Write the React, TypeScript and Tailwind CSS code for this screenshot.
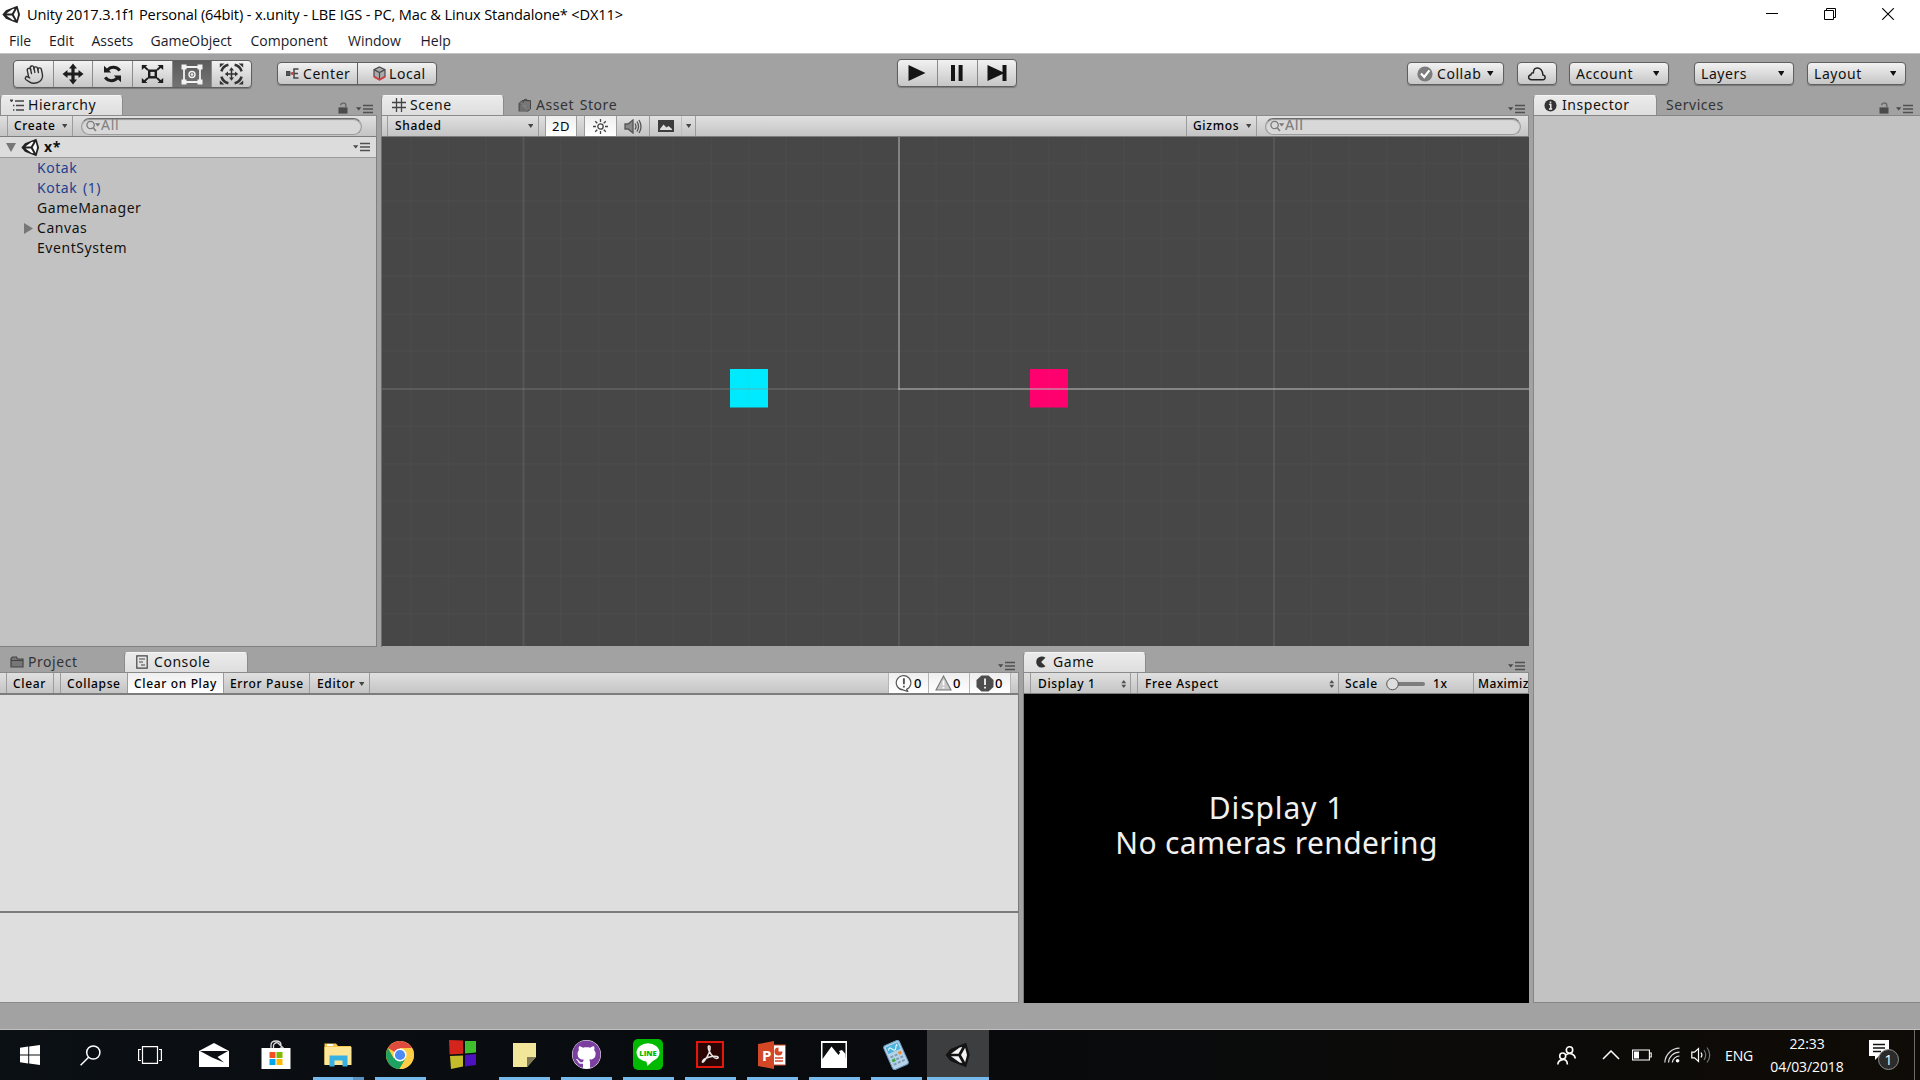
import React from "react";
import { Hand } from "lucide-react";
import { FaGithub } from "react-icons/fa";

const UI = "font-['Noto_Sans','DejaVu_Sans',sans-serif]";
const LABEL = "text-[14px] leading-[20px] tracking-[0.55px] [word-spacing:1.5px] whitespace-nowrap";
const SMALL = "text-[12px] leading-[20px] tracking-[0.65px] font-medium whitespace-nowrap";
const BAR = "flex h-[22px] shrink-0 items-stretch border-t border-[#8a8a8a] border-b border-b-[#7d7d7d] bg-gradient-to-b from-[#e0e0e0] to-[#c4c4c4]";
const BUTTON = "flex items-center rounded-[4px] border border-[#5f5f5f] bg-gradient-to-b from-[#f2f2f2] to-[#c6c6c6] shadow-[0_1px_1px_rgba(0,0,0,0.25)]";

function UnityMark({ size, dark = "#222", light = "#fff" }: { size: number; dark?: string; light?: string }) {
  return (
    <svg width={size} height={size} viewBox="0 0 24 24" className="shrink-0">
      <path d="M0.5 12 L5 6.5 L19.5 0.8 L22.8 12 L19.5 23.2 L5 17.5 Z" fill={dark} />
      <path d="M5.5 10.8 L13.5 5 L16 4.6 L12.5 10.8 Z" fill={light} />
      <path d="M5.5 13.2 L13.5 19 L16 19.4 L12.5 13.2 Z" fill={light} />
      <path d="M14.8 12 L18.6 5.2 L20.3 12 L18.6 18.8 Z" fill={light} />
    </svg>
  );
}

function Down({ w = 6.5, color = "#444" }: { w?: number; color?: string }) {
  return (
    <svg width={w} height={w > 6 ? 5 : 4} viewBox="0 0 8 5" preserveAspectRatio="none" className="shrink-0">
      <path d="M0 0H8L4 5Z" fill={color} />
    </svg>
  );
}

function UpDown() {
  return (
    <svg width="5.5" height="8" viewBox="0 0 6 10" className="shrink-0">
      <path d="M3 0L6 4H0ZM3 10L0 6H6Z" fill="#505050" />
    </svg>
  );
}

function PaneMenu() {
  return (
    <svg width="18" height="10" viewBox="0 0 18 10" className="shrink-0">
      <path d="M0 3.2H5.4L2.7 6.4Z" fill="#4a4a4a" />
      <path d="M7 1.6H17M7 5H17M7 8.4H17" stroke="#505050" strokeWidth="1.5" />
    </svg>
  );
}

function Lock() {
  return (
    <svg width="10" height="12" viewBox="0 0 10 12" className="shrink-0">
      <rect x="0.5" y="5.4" width="9" height="6.2" fill="#4b4b4b" />
      <path d="M2.6 3.2C2.6 0.6 7.6 0.2 7.8 3V5.6" stroke="#6a6a6a" strokeWidth="1.4" fill="none" />
    </svg>
  );
}

function Search({ className }: { className: string }) {
  return (
    <div className={`flex h-[17px] items-center self-center rounded-full border border-[#9a9a9a] border-t-[#6d6d6d] bg-[#d8d8d8] pl-[4px] shadow-[inset_0_1px_1px_rgba(0,0,0,0.3)] ${className}`}>
      <svg width="15" height="12" viewBox="0 0 15 12" className="shrink-0">
        <circle cx="4.6" cy="5" r="3.7" stroke="#7b7b7b" strokeWidth="1.3" fill="none" />
        <path d="M7 7.6L10 11" stroke="#7b7b7b" strokeWidth="1.5" />
        <path d="M9 3.2H14.4L11.7 6.4Z" fill="#777" />
      </svg>
      <span className="pb-[2px] text-[14px] leading-[14px] tracking-[0.7px] text-[#808080]">All</span>
    </div>
  );
}

function Tab({ icon, label, className }: { icon: React.ReactNode; label: string; className: string }) {
  return (
    <div className={`flex h-[20px] items-center ${LABEL} ${className}`}>
      <span className="flex w-[18px] shrink-0 items-center">{icon}</span>
      {label}
    </div>
  );
}

const ACTIVE = "rounded-t-[4px] border-t border-x border-[#8b8b8b] border-t-[#f5f5f5] bg-gradient-to-b from-[#ebebeb] to-[#dedede] pb-[1px] text-[#111]";
const IDLE = "text-[#333]";

function Menu() {
  const items: [string, string][] = [
    ["File", "w-[40px]"],
    ["Edit", "w-[42.5px]"],
    ["Assets", "w-[59px]"],
    ["GameObject", "w-[100px]"],
    ["Component", "w-[97.5px]"],
    ["Window", "w-[72.5px]"],
    ["Help", "w-[40px]"],
  ];
  return (
    <header className="h-[53px] shrink-0 bg-white font-['Open_Sans','Noto_Sans',sans-serif] text-black">
      <div className="flex h-[28px] items-center">
        <div className="ml-[2px] mr-[6px]">
          <UnityMark size={19} />
        </div>
        <span className="text-[14.6px] leading-[20px] tracking-[-0.14px] whitespace-nowrap">
          Unity 2017.3.1f1 Personal (64bit) - x.unity - LBE IGS - PC, Mac &amp; Linux Standalone* &lt;DX11&gt;
        </span>
        <div className="ml-auto flex items-center gap-[46px] pr-[26px]">
          <svg width="12" height="12" viewBox="0 0 12 12"><path d="M0 5.5H12" stroke="#000" /></svg>
          <svg width="12" height="12" viewBox="0 0 12 12" fill="none" stroke="#000"><path d="M0.5 2.5H9.5V11.5H0.5ZM2.5 2.5V0.5H11.5V9.5H9.5" /></svg>
          <svg width="12" height="12" viewBox="0 0 12 12"><path d="M0.2 0.2L11.8 11.8M11.8 0.2L0.2 11.8" stroke="#000" strokeWidth="1.1" /></svg>
        </div>
      </div>
      <nav className="flex h-[25px] pl-[9px] text-[14px] leading-[26px] text-[#1a1a2a]">
        {items.map(([t, w]) => (
          <span key={t} className={`${w} shrink-0 whitespace-nowrap`}>{t}</span>
        ))}
      </nav>
    </header>
  );
}

function ToolIcon({ kind }: { kind: number }) {
  if (kind === 0) return <Hand size={21} strokeWidth={1.6} color="#333" className="-rotate-12" />;
  if (kind === 1)
    return (
      <svg width="22" height="22" viewBox="0 0 22 22" fill="#1d1d1d">
        <path d="M11 0.5L15 5.5H12.6V9.4H16.5V7L21.5 11L16.5 15V12.6H12.6V16.5H15L11 21.5L7 16.5H9.4V12.6H5.5V15L0.5 11L5.5 7V9.4H9.4V5.5H7Z" />
      </svg>
    );
  if (kind === 2)
    return (
      <svg width="19" height="18" viewBox="0 0 19 18" fill="none" stroke="#1d1d1d" strokeWidth="3">
        <path d="M4.5 5.2C7.5 1.4 13.5 1.2 16.8 5.6" />
        <path d="M14.5 12.8C11.5 16.6 5.5 16.8 2.2 12.4" />
        <path d="M1 0.8V7.6H8.2Z" fill="#1d1d1d" stroke="none" />
        <path d="M18 17.2V10.4H10.8Z" fill="#1d1d1d" stroke="none" />
      </svg>
    );
  if (kind === 3)
    return (
      <svg width="23" height="20" viewBox="0 0 23 20" fill="none" stroke="#1d1d1d">
        <rect x="8.2" y="6.7" width="6.6" height="6.6" strokeWidth="2.4" />
        <path d="M2 1.5L7 6M21 1.5L16 6M2 18.5L7 14M21 18.5L16 14" strokeWidth="1.8" />
        <path d="M0.8 6V1H6.5ZM22.2 6V1H16.5ZM0.8 14V19H6.5ZM22.2 14V19H16.5Z" fill="#1d1d1d" stroke="none" />
      </svg>
    );
  if (kind === 4)
    return (
      <svg width="22" height="21" viewBox="0 0 22 21" fill="none" stroke="#f2f2f2">
        <path d="M3 3H19V18H3Z" strokeWidth="1.8" />
        <circle cx="11" cy="10.5" r="3" strokeWidth="1.4" />
        <circle cx="11" cy="10.5" r="0.9" fill="#f2f2f2" />
        <path d="M0.5 0.5H5.5V5.5H0.5ZM16.5 0.5H21.5V5.5H16.5ZM0.5 15.5H5.5V20.5H0.5ZM16.5 15.5H21.5V20.5H16.5Z" fill="#f2f2f2" stroke="none" />
      </svg>
    );
  return (
    <svg width="25" height="22" viewBox="0 0 25 22" fill="none" stroke="#333">
      <path d="M2.4 8.4C3.4 5 6 2.6 9.4 1.8M15.6 1.8C19 2.6 21.6 5 22.6 8.4M2.4 13.6C3.4 17 6 19.4 9.4 20.2M15.6 20.2C19 19.4 21.6 17 22.6 13.6" strokeWidth="2.6" />
      <path d="M0.8 4.4V0.5H5.4ZM24.2 4.4V0.5H19.6ZM0.8 17.6V21.5H5.4ZM24.2 17.6V21.5H19.6Z" fill="#333" stroke="none" />
      <path d="M12.5 6V16M7.5 11H17.5" strokeWidth="1.5" />
      <path d="M12.5 4.2L15 7.4H10ZM12.5 17.8L15 14.6H10ZM5.8 11L9 8.6V13.4ZM19.2 11L16 8.6V13.4Z" fill="#333" stroke="none" />
    </svg>
  );
}

function Toolbar() {
  return (
    <div className="flex h-[42px] shrink-0 items-start border-t border-[#c4c4c4] bg-[#a2a2a2] pl-[13px] text-[#111]">
      <div className={`${BUTTON} mt-[6px] h-[28px] w-[239px] overflow-hidden`}>
        {[0, 1, 2, 3, 4, 5].map((k) => (
          <div
            key={k}
            className={`flex h-full flex-1 items-center justify-center ${k < 5 ? "border-r border-[#8a8a8a]" : ""} ${k === 4 ? "bg-gradient-to-b from-[#5c5c5c] to-[#737373]" : ""}`}
          >
            <ToolIcon kind={k} />
          </div>
        ))}
      </div>
      <div className={`${BUTTON} ml-[25px] mt-[8px] h-[23px] w-[160px] ${LABEL}`}>
        <div className="flex h-full w-[80px] items-center border-r border-[#5f5f5f] pl-[8px]">
          <svg width="13" height="11" viewBox="0 0 13 11" className="mr-[4px]" fill="none" stroke="#444">
            <path d="M0 3.5H4V7.5H0Z" fill="#555" />
            <path d="M12.5 1H8V10H12.5M8 5.5H12" strokeWidth="1.5" />
            <circle cx="6.3" cy="5.5" r="1.4" fill="#b44" stroke="none" />
          </svg>
          Center
        </div>
        <div className="flex items-center pl-[15px]">
          <svg width="13" height="15" viewBox="0 0 13 15" className="mr-[3px]" fill="none" stroke="#4a4a4a" strokeWidth="1.2">
            <path d="M6.5 1L12 3.6V10.6L6.5 13.8L1 10.6V3.6Z" fill="#aaa" />
            <path d="M1 3.6L6.5 6.6L12 3.6M6.5 6.6V13" />
            <path d="M1 10.6L6.5 13.8L12 10.6" stroke="#c44" strokeWidth="1.8" />
          </svg>
          Local
        </div>
      </div>
      <div className={`${BUTTON} ml-[460px] mt-[5px] h-[28px] w-[120px]`}>
        <div className="flex h-full w-[40px] items-center justify-center border-r border-[#8a8a8a] pr-[2px]">
          <svg width="18" height="16" viewBox="0 0 19 17"><path d="M0.5 0L18.5 8.5L0.5 17Z" fill="#141414" /></svg>
        </div>
        <div className="flex h-full w-[40px] items-center justify-center border-r border-[#8a8a8a] pr-[1px]">
          <svg width="12" height="16" viewBox="0 0 12 17" preserveAspectRatio="none"><path d="M0 0H4V17H0ZM7.6 0H11.6V17H7.6Z" fill="#141414" /></svg>
        </div>
        <div className="flex h-full flex-1 items-center justify-center">
          <svg width="20" height="16" viewBox="0 0 20 17" preserveAspectRatio="none"><path d="M0.5 0L15.5 7.5V0H19.5V17H15.5V9.5L0.5 17Z" fill="#141414" /></svg>
        </div>
      </div>
      <div className={`${BUTTON} ml-[390px] mt-[8px] h-[23px] w-[97px] pl-[9px] ${LABEL}`}>
        <svg width="16" height="16" viewBox="0 0 16 16" className="mr-[4px]">
          <circle cx="8" cy="8" r="7.6" fill="#7d7d7d" />
          <path d="M4 7.6L7.2 11L12.4 4.4" stroke="#fff" strokeWidth="2.2" fill="none" />
        </svg>
        Collab
        <span className="ml-[6px] flex items-center"><Down color="#111" /></span>
      </div>
      <div className={`${BUTTON} ml-[13px] mt-[8px] h-[23px] w-[40px] justify-center`}>
        <svg width="20" height="14" viewBox="0 0 20 14" fill="none" stroke="#222" strokeWidth="1.4">
          <path d="M4.6 12.8H15.8C18.8 12.4 19 8.6 15.9 8C15.8 3.2 13 0.9 10.2 1C7.8 1.1 6.4 3.4 6.4 5.8C4.8 5.6 4 6.6 4 7.8C0.6 8.6 0.8 12.2 4.6 12.8Z" />
        </svg>
      </div>
      {[
        ["Account", "ml-[12px] w-[100px]"],
        ["Layers", "ml-[25px] w-[100px]"],
        ["Layout", "ml-[13px] w-[99px]"],
      ].map(([t, c]) => (
        <div key={t} className={`${BUTTON} mt-[8px] h-[23px] justify-between pl-[6px] pr-[9px] ${LABEL} ${c}`}>
          {t}
          <Down color="#111" />
        </div>
      ))}
    </div>
  );
}

function Hierarchy() {
  return (
    <section className="flex w-[377px] shrink-0 flex-col">
      <div className="flex">
        <Tab
          className={`${ACTIVE} w-[123px] pl-[9px]`}
          label="Hierarchy"
          icon={
            <svg width="15" height="13" viewBox="0 0 15 13" stroke="#444" strokeWidth="1.5">
              <path d="M5 2H14M6 6.5H14M6 11H14M0 1.2H3M1.5 1V3M3 6.5H4.4M3 11H4.4" />
            </svg>
          }
        />
        <div className="ml-auto flex items-end gap-[8px] pb-[1px] pr-[3px]">
          <Lock />
          <PaneMenu />
        </div>
      </div>
      <div className={`${BAR} border-r`}>
        <div className="w-[8px] border-r border-[#9c9c9c]" />
        <div className={`flex w-[65px] items-center justify-between border-r border-[#9c9c9c] pl-[6px] pr-[5px] ${SMALL}`}>
          Create
          <Down w={5.5} />
        </div>
        <Search className="ml-[8px] w-[281px]" />
      </div>
      <div className="flex flex-1 flex-col border-r border-b border-[#808080] bg-[#c2c2c2] text-[#111]">
        <div className="flex h-[21px] items-center border-b border-[#9a9a9a] bg-[#dcdcdc] pl-[6px] pr-[5px]">
          <svg width="10" height="9" viewBox="0 0 10 9"><path d="M0 0H10L5 9Z" fill="#777" /></svg>
          <div className="ml-[5px] mr-[4px]"><UnityMark size={19} /></div>
          <span className={`${LABEL} font-bold`}>x*</span>
          <span className="ml-auto"><PaneMenu /></span>
        </div>
        <ul className={LABEL}>
          <li className="pl-[37px] text-[#1f3f8f]">Kotak</li>
          <li className="pl-[37px] text-[#1f3f8f]">Kotak (1)</li>
          <li className="pl-[37px]">GameManager</li>
          <li className="flex items-center pl-[24px]">
            <svg width="9" height="11" viewBox="0 0 9 11" className="mr-[4px]"><path d="M0 0L9 5.5L0 11Z" fill="#777" /></svg>
            Canvas
          </li>
          <li className="pl-[37px]">EventSystem</li>
        </ul>
      </div>
    </section>
  );
}

function Grid() {
  const xs = Array.from({ length: 31 }, (_, i) => i - 13).filter((i) => i % 10 !== 0);
  const ys = [-6, -5, -4, -3, -2, -1, 1, 2, 3, 4, 5, 6];
  return (
    <svg width="1147" height="509" viewBox="382 137 1147 509" className="block">
      <rect x="382" y="137" width="1147" height="509" fill="#474747" />
      <rect x="730" y="369" width="38" height="38.5" fill="#00eaff" />
      <rect x="1030" y="369" width="38" height="38.5" fill="#ff006e" />
      <g stroke="#888" strokeOpacity="0.055" strokeWidth="2">
        {xs.map((i) => (
          <path key={i} d={`M${898.7 + i * 37.53} 137V646`} />
        ))}
        {ys.map((i) => (
          <path key={i} d={`M382 ${388.7 + i * 37.53}H1529`} />
        ))}
      </g>
      <path d="M523.5 137V646M1274 137V646M899 389V646" stroke="#fff" strokeOpacity="0.085" strokeWidth="2" />
      <path d="M382 389H898" stroke="#8a8a8a" strokeOpacity="0.3" strokeWidth="2" />
      <path d="M899 137V390" stroke="#828282" strokeWidth="2" />
      <path d="M898 389H1529" stroke="#b4b4b4" strokeOpacity="0.58" strokeWidth="2" />
    </svg>
  );
}

function Scene() {
  return (
    <section className="ml-[4px] flex w-[1148px] shrink-0 flex-col">
      <div className="flex">
        <Tab
          className={`${ACTIVE} w-[123px] pl-[10px]`}
          label="Scene"
          icon={<svg width="14" height="14" viewBox="0 0 14 14" stroke="#444" strokeWidth="1.3"><path d="M4.5 0V14M9.5 0V14M0 4.5H14M0 9.5H14" /></svg>}
        />
        <Tab
          className={`${IDLE} pl-[14px]`}
          label="Asset Store"
          icon={
            <svg width="13" height="14" viewBox="0 0 13 14">
              <path d="M0.5 5H9.5V13.5H0.5Z" fill="#555" />
              <path d="M1.5 5L4 2.5H12.5V11L9.5 13.5" fill="#777" stroke="#444" />
              <path d="M5 5C5 0.5 9.5 0 10 3.5" fill="none" stroke="#444" />
              <path d="M3 7V13M5 7V13M7 7V13" stroke="#888" />
            </svg>
          }
        />
        <span className="ml-auto flex items-end pb-[1px] pr-[3px]"><PaneMenu /></span>
      </div>
      <div className={`${BAR} border-l border-r ${SMALL}`}>
        <div className="w-[6px] border-r border-[#9c9c9c]" />
        <div className="flex w-[151px] items-center justify-between border-r border-[#9c9c9c] pl-[7px] pr-[5px]">Shaded<Down w={5.5} /></div>
        <div className="w-[7px] border-r border-[#9c9c9c]" />
        <div className="flex w-[31px] items-center justify-center border-r border-[#9c9c9c] bg-gradient-to-b from-[#efefef] to-white text-[13px] font-normal">2D</div>
        <div className="w-[8px] border-r border-[#9c9c9c]" />
        <div className="flex w-[32px] items-center justify-center border-r border-[#9c9c9c] bg-gradient-to-b from-[#efefef] to-white">
          <svg width="15" height="15" viewBox="0 0 15 15" fill="none" stroke="#444" strokeWidth="1.3">
            <circle cx="7.5" cy="7.5" r="2.7" />
            <path d="M7.5 0V3M7.5 12V15M0 7.5H3M12 7.5H15M2.2 2.2L4.3 4.3M10.7 10.7L12.8 12.8M12.8 2.2L10.7 4.3M4.3 10.7L2.2 12.8" />
          </svg>
        </div>
        <div className="flex w-[33px] items-center justify-center border-r border-[#9c9c9c]">
          <svg width="18" height="15" viewBox="0 0 18 15" fill="none" stroke="#555" strokeWidth="1.3">
            <path d="M1 5H4L9 1V14L4 10H1Z" fill="#888" />
            <path d="M11 4.5Q13 7.5 11 10.5M13 2.5Q16 7.5 13 12.5M15 1Q19 7.5 15 14" />
          </svg>
        </div>
        <div className="flex w-[32px] items-center justify-center border-r border-[#bdbdbd]">
          <svg width="16" height="12" viewBox="0 0 16 12"><rect width="16" height="12" fill="#3c3c3c" /><path d="M2 9L5.5 4.5L8.5 7.5L10.5 6L14 9V10H2Z" fill="#ddd" /></svg>
        </div>
        <div className="flex w-[14px] items-center justify-center border-r border-[#9c9c9c]"><Down w={5.5} /></div>
        <div className="ml-auto flex w-[71px] items-center justify-between border-x border-[#9c9c9c] pl-[6px] pr-[5px]">Gizmos<Down w={5.5} /></div>
        <Search className="ml-[8px] mr-[7px] w-[256px]" />
      </div>
      <div className="flex-1 overflow-hidden border-l border-[#6f6f6f]"><Grid /></div>
    </section>
  );
}

function Console() {
  const toggle = "flex items-center border-r border-[#9c9c9c] pl-[6px] pt-[1px]";
  const count = "flex items-center gap-[1px] border-r border-[#b5b5b5] bg-gradient-to-b from-[#eeeeee] to-white pl-[6px]";
  return (
    <section className="flex w-[1019px] shrink-0 flex-col">
      <div className="flex">
        <Tab
          className={`${IDLE} w-[124px] pl-[10px]`}
          label="Project"
          icon={<svg width="14" height="12" viewBox="0 0 14 12" stroke="#444" fill="#777" strokeWidth="1.2"><path d="M1 11V2.5L2.5 1H6.5L7.5 3H13V11ZM1 4.5H13" /></svg>}
        />
        <Tab
          className={`${ACTIVE} w-[124px] pl-[11px]`}
          label="Console"
          icon={<svg width="12" height="14" viewBox="0 0 12 14" stroke="#444" fill="none" strokeWidth="1.2"><path d="M0.8 0.8H11.2V13.2H0.8ZM3 4H9M3 7H7M5 10H9" /></svg>}
        />
        <span className="ml-auto flex items-end pb-[1px] pr-[3px]"><PaneMenu /></span>
      </div>
      <div className={`${BAR} border-r ${SMALL}`}>
        <div className="w-[7px] border-r border-[#9c9c9c]" />
        <div className={`${toggle} w-[47px]`}>Clear</div>
        <div className="w-[7px] border-r border-[#9c9c9c]" />
        <div className={`${toggle} w-[67px]`}>Collapse</div>
        <div className={`${toggle} w-[96px] bg-gradient-to-b from-[#efefef] to-white`}>Clear on Play</div>
        <div className={`${toggle} w-[86px]`}>Error Pause</div>
        <div className={`${toggle} w-[60px] justify-between pl-[7px] pr-[5px]`}>Editor<Down w={5.5} /></div>
        <div className={`${count} ml-auto w-[41px] border-l text-[13px]`}>
          <svg width="18" height="17" viewBox="0 0 17 16" fill="#fff" stroke="#555" strokeWidth="1.1"><path d="M7.5 14A6.9 6.7 0 1 1 11 13.4L12 15.5Z" /><path d="M8.4 3V8.8M8.4 10.2V11.8" strokeWidth="1.8" /></svg>
          0
        </div>
        <div className={`${count} w-[41px] text-[13px]`}>
          <svg width="17" height="16" viewBox="0 0 17 16" fill="#c9c9c9" stroke="#777" strokeWidth="1.1"><path d="M8.5 1L16 15H1Z" /><path d="M8.5 5.5V10.5M8.5 12V13.4" stroke="#fff" strokeWidth="1.7" /></svg>
          0
        </div>
        <div className={`${count} mr-[7px] w-[41px] text-[13px]`}>
          <svg width="18" height="17" viewBox="0 0 18 17"><path d="M5.5 0.5H12.5L17.5 5V12L12.5 16.5H5.5L0.5 12V5Z" fill="#4d4d4d" /><path d="M9 3.5V10M9 11.7V13.6" stroke="#e5e5e5" strokeWidth="2" /></svg>
          0
        </div>
      </div>
      <div className="h-[219px] border-b-2 border-t border-r border-[#7b7b7b] bg-[#dedede]" />
      <div className="flex-1 border-r border-b border-[#8a8a8a] bg-[#dedede]" />
    </section>
  );
}

function Game() {
  return (
    <section className="ml-[4px] flex w-[506px] shrink-0 flex-col">
      <div className="flex">
        <Tab
          className={`${ACTIVE} w-[123px] pl-[11px]`}
          label="Game"
          icon={<svg width="12" height="12" viewBox="0 0 12 12"><path d="M10.5 1.8A5.6 5.6 0 1 0 10.5 10.2L6.5 6.4V5.4Z" fill="#333" /></svg>}
        />
        <span className="ml-auto flex items-end pb-[1px] pr-[3px]"><PaneMenu /></span>
      </div>
      <div className={`${BAR} overflow-hidden border-l border-r ${SMALL}`}>
        <div className="w-[7px] shrink-0 border-r border-[#9c9c9c]" />
        <div className="flex w-[100px] shrink-0 items-center justify-between border-r border-[#9c9c9c] pl-[7px] pr-[4px] pt-[1px]">Display 1<UpDown /></div>
        <div className="w-[7px] shrink-0 border-r border-[#9c9c9c]" />
        <div className="flex w-[201px] shrink-0 items-center justify-between border-r border-[#9c9c9c] pl-[7px] pr-[4px] pt-[1px]">Free Aspect<UpDown /></div>
        <div className="flex w-[135px] shrink-0 items-center border-r border-[#9c9c9c] pl-[6px] pt-[2px]">
          <span className="w-[41px]">Scale</span>
          <svg width="40" height="14" viewBox="0 0 40 14">
            <rect x="8" y="5" width="31" height="4" rx="2" fill="#7d7d7d" />
            <circle cx="6.5" cy="7" r="5.8" fill="#dedede" stroke="#555" />
          </svg>
          <span className="ml-[7px]">1x</span>
        </div>
        <div className="pl-[4px] pt-[1px] tracking-[0.4px]">Maximize On Play</div>
      </div>
      <div className="flex flex-1 flex-col items-center border-l border-[#7b7b7b] bg-black pt-[96px] text-[30px] leading-[35px] tracking-[0.35px] text-[#f0f0f0]">
        <div className="tracking-[0.9px]">Display 1</div>
        <div>No cameras rendering</div>
      </div>
    </section>
  );
}

function Inspector() {
  return (
    <section className="ml-[4px] flex flex-1 flex-col">
      <div className="flex">
        <Tab
          className={`${ACTIVE} w-[124px] pl-[10px]`}
          label="Inspector"
          icon={<svg width="13" height="13" viewBox="0 0 14 14"><circle cx="7" cy="7" r="6.5" fill="#333" /><path d="M7 2.6V4.6M5.5 6H7.3V10.5M5.3 10.8H8.8" stroke="#eee" strokeWidth="1.6" /></svg>}
        />
        <div className={`pl-[9px] ${LABEL} ${IDLE}`}>Services</div>
        <div className="ml-auto flex items-end gap-[7px] pb-[1px] pr-[6px]"><Lock /><PaneMenu /></div>
      </div>
      <div className="flex-1 border border-[#868686] border-r-0 bg-[#c2c2c2]" />
    </section>
  );
}

function Cell({ children, running, active, first }: { children: React.ReactNode; running?: boolean; active?: boolean; first?: boolean }) {
  return (
    <div className={`flex h-full w-[62px] shrink-0 flex-col items-center ${active ? "bg-[#3d3e3f]" : ""}`}>
      <div className="flex flex-1 items-center justify-center pt-[2px]">{children}</div>
      {running ? (
        <div className={`flex h-[3px] justify-end bg-[#76b9ed] ${active ? "w-full" : "w-[51px]"}`}>{first && <span className="w-[11px] bg-[#5a92c0]" />}</div>
      ) : (
        <div className="h-[3px]" />
      )}
    </div>
  );
}

function Taskbar() {
  return (
    <footer className="flex h-[50px] shrink-0 bg-gradient-to-r from-[#0b1014] via-[#080a0d] via-50% to-[#0f0b06] font-['Open_Sans','Noto_Sans',sans-serif] text-white">
      <div className="flex w-[183px] shrink-0 items-center">
        <div className="flex w-[60px] justify-center">
          <svg width="20" height="20" viewBox="0 0 20 20" fill="#fff"><path d="M0 2.8L8.2 1.6V9.4H0ZM9.2 1.4L20 0V9.4H9.2ZM0 10.4H8.2V18.4L0 17.2ZM9.2 10.4H20V20L9.2 18.6Z" /></svg>
        </div>
        <div className="flex w-[60px] justify-center">
          <svg width="21" height="21" viewBox="0 0 21 21" fill="none" stroke="#fff" strokeWidth="1.5"><circle cx="13.3" cy="7.5" r="6.6" /><path d="M8.6 12.2L0.6 20.2" /></svg>
        </div>
        <div className="flex w-[60px] justify-center">
          <svg width="24" height="18" viewBox="0 0 24 18" fill="none" stroke="#fff" strokeWidth="1.2"><path d="M4.5 0.6H19.5V17.4H4.5ZM3 3.5H0.6V14.5H3M21 3.5H23.4V14.5H21" /></svg>
        </div>
      </div>
      <Cell>
        <svg width="30" height="24" viewBox="0 0 30 24"><path d="M0 8L15 0L30 8V24H0Z" fill="#fff" /><path d="M1 8H29L18.5 14L25 19.5L13 14.5Z" fill="#0b0f13" /></svg>
      </Cell>
      <Cell>
        <svg width="30" height="29" viewBox="0 0 30 29">
          <path d="M10 8V5Q10 1 15 1T20 5V8M12.5 8V5Q15 1 18 4T22.5 8" fill="none" stroke="#ddd" strokeWidth="1.3" />
          <path d="M0.5 8H29.5V29H0.5Z" fill="#fff" />
          <path d="M8.5 12H14.5V18H8.5Z" fill="#f25022" /><path d="M15.5 12H21.5V18H15.5Z" fill="#7fba00" /><path d="M8.5 19H14.5V25H8.5Z" fill="#00a4ef" /><path d="M15.5 19H21.5V25H15.5Z" fill="#ffb900" />
        </svg>
      </Cell>
      <Cell running first>
        <svg width="28" height="24" viewBox="0 0 28 24">
          <path d="M0.5 0.5H12L14 3H27V21.5H0.5Z" fill="#f5c84c" /><path d="M3 1H9V3H3Z" fill="#fff" /><path d="M0.5 4H27.5V22H0.5Z" fill="#ffe596" />
          <path d="M5.5 12.5H23.5V23.5H18.5V17.5H10.5V23.5H5.5Z" fill="#37b1e2" />
        </svg>
      </Cell>
      <Cell running>
        <svg width="28" height="28" viewBox="0 0 28 28">
          <circle cx="14" cy="14" r="14" fill="#ffcd46" />
          <path d="M14 14L1.9 7A14 14 0 0 1 26.1 7H14Z" fill="#e04a3f" />
          <path d="M1.9 7A14 14 0 0 0 13.5 28L20 17.5L14 14L7.9 17.5Z" fill="#1da261" />
          <path d="M14 7.5H26.4A14 14 0 0 1 13.5 28L19.6 17.5Z" fill="#ffcd46" />
          <circle cx="14" cy="14" r="6.5" fill="#fff" /><circle cx="14" cy="14" r="5.1" fill="#4c8bf5" />
        </svg>
      </Cell>
      <Cell>
        <svg width="27" height="29" viewBox="0 0 27 29"><path d="M0 0L14 0.6V13.8L0.6 14.5Z" fill="#d3251b" /><path d="M16 1L27 1V12.5L16 13.5Z" fill="#3fbf2d" /><path d="M1 16L14 15.5V26.5L2 29Z" fill="#c3bd2c" /><path d="M16 15L27 14V25L16 26.5Z" fill="#4b12bd" /></svg>
      </Cell>
      <Cell running>
        <svg width="23" height="24" viewBox="0 0 23 24"><path d="M0 0H23V14L14 24H0Z" fill="#f2e69b" /><path d="M23 14L14 24V14Z" fill="#7f7a55" /></svg>
      </Cell>
      <Cell running>
        <span className="flex h-[29px] w-[29px] items-center justify-center rounded-full bg-white">
          <FaGithub size={29} color="#7b3fa0" />
        </span>
      </Cell>
      <Cell running>
        <span className="relative flex h-[31px] w-[30px] items-center justify-center rounded-[5px] bg-[#00b900]">
          <svg width="24" height="23" viewBox="0 0 24 23" fill="#fff"><ellipse cx="12" cy="9.5" rx="11.5" ry="9.3" /><path d="M10 17L11.5 23L20 15Z" /></svg>
          <span className="absolute top-[9px] text-[7.5px] leading-[10px] font-extrabold text-[#00b900]">LINE</span>
        </span>
      </Cell>
      <Cell running>
        <svg width="28" height="27" viewBox="0 0 28 27" fill="none"><rect x="1" y="1" width="26" height="25" fill="#2a0504" stroke="#e2180f" strokeWidth="2" /><path d="M12.5 5C15.5 4 14 11 11 16C8.5 20.5 6 22.5 6.5 20.5C7.5 17 17 14.5 21 15.5C24 16.5 21 18.5 18 16.5C14 13.5 11.5 7 12.5 5Z" stroke="#e6e6e6" strokeWidth="1.5" /></svg>
      </Cell>
      <Cell running>
        <span className="relative flex h-[28px] w-[28px] items-center">
          <svg width="28" height="28" viewBox="0 0 28 28">
            <path d="M15 4H27.5V24H15Z" fill="#fff" stroke="#d24726" /><path d="M17 17H25M17 20H25" stroke="#d24726" strokeWidth="1.5" />
            <circle cx="20.5" cy="10.5" r="4" fill="#d24726" /><path d="M20.5 10.5V6H25V10.5Z" fill="#fff" />
            <path d="M0 3L16 0V28L0 25Z" fill="#d24726" />
          </svg>
          <span className="absolute left-[4px] text-[15px] leading-[16px] font-bold">P</span>
        </span>
      </Cell>
      <Cell running>
        <svg width="26" height="27" viewBox="0 0 26 27"><rect width="26" height="27" fill="#fff" /><path d="M1.5 2H24.5V17L20 10.5L17.5 14L10.5 5.5L1.5 18Z" fill="#0b0d10" /><path d="M18 10L24.5 20V13L21 9Z" fill="#fff" /></svg>
      </Cell>
      <Cell running>
        <svg width="30" height="30" viewBox="0 0 30 30">
          <g transform="rotate(-24 15 15)">
            <rect x="6.5" y="2" width="17" height="26" rx="2.5" fill="#b8d2e8" stroke="#6e9cc0" />
            <rect x="8.5" y="4" width="13" height="7" fill="#49b4dc" />
            <path d="M10 8Q12 4 14 8T18 8T20 7" stroke="#fff" fill="none" />
            <path d="M9 14H12V16H9ZM13.5 14H16.5V16H13.5ZM18 18H21V20H18ZM18 22H21V24H18ZM13.5 18H16.5V20H13.5ZM9 22H12V24H9ZM13.5 22H16.5V24H13.5Z" fill="#7d9db8" />
            <path d="M18 13H21V16H18Z" fill="#ee8b2a" /><path d="M9 17.5H12.5V20.5H9Z" fill="#45a94b" />
          </g>
        </svg>
      </Cell>
      <Cell running active>
        <UnityMark size={26} dark="#141414" light="#f4f4f4" />
      </Cell>
      <div className="ml-auto flex items-center">
        <svg width="19" height="19" viewBox="0 0 19 19" fill="none" stroke="#fff" strokeWidth="1.6">
          <circle cx="12.5" cy="4" r="3.2" /><circle cx="5.7" cy="10" r="3" /><path d="M0.8 18.5Q1.2 14 5.7 13.6T10.4 18.5M9 8.8Q12 6.6 15 8T18.2 12.5" />
        </svg>
        <svg width="18" height="10" viewBox="0 0 18 10" fill="none" stroke="#fff" strokeWidth="1.5" className="ml-[26px]"><path d="M1 9L9 1L17 9" /></svg>
        <svg width="20" height="12" viewBox="0 0 20 12" fill="none" stroke="#fff" strokeWidth="1.1" className="ml-[12px]"><path d="M0.6 1H17.4V11H0.6ZM17.4 4H19.2V8H17.4" /><path d="M2 2.5H7V9.5H2Z" fill="#fff" stroke="none" /></svg>
        <svg width="16" height="16" viewBox="0 0 16 16" fill="none" stroke="#ddd" strokeWidth="1.2" className="ml-[12px]"><path d="M0.8 15.5A15 15 0 0 1 15.5 1.2M4.5 15.5A11 11 0 0 1 15.5 5.2M8.3 15.5A7.5 7.5 0 0 1 15.5 9" /><circle cx="13.6" cy="13.8" r="1.8" fill="#fff" stroke="none" /></svg>
        <svg width="21" height="18" viewBox="0 0 21 18" fill="none" stroke="#fff" strokeWidth="1.2" className="ml-[11px]"><path d="M0.8 6.2H3.5L7.5 2.5V15.5L3.5 11.8H0.8Z" /><path d="M10 6.5Q11.8 9 10 11.5" /><path d="M13 4Q16.4 9 13 14M16 1.5Q21.5 9 16 16.5" stroke="#777" /></svg>
        <span className="ml-[13px] w-[44px] text-[14px] tracking-[-0.1px]">ENG</span>
        <div className="w-[76px] text-center text-[14px] leading-[23px] tracking-[-0.1px] whitespace-nowrap">
          <div>22:33</div>
          <div>04/03/2018</div>
        </div>
        <div className="relative ml-[24px] h-[30px] w-[30px]">
          <svg width="20" height="20" viewBox="0 0 20 20"><path d="M0 0H20V16H10L6 20V16H0Z" fill="#fff" /><path d="M4 4.5H16M4 8H16M4 11.5H12" stroke="#111" strokeWidth="1.3" /></svg>
          <span className="absolute left-[9px] top-[9px] flex h-[21px] w-[21px] items-center justify-center rounded-full border border-[#8f8f8f] bg-[#2b2b2b] text-[14px]">1</span>
        </div>
        <div className="ml-[15px] h-[50px] w-[6px] border-l border-[#6b6b6b]" />
      </div>
    </footer>
  );
}

export default function App() {
  return (
    <div className={`flex h-[1080px] w-[1920px] flex-col overflow-hidden bg-[#a2a2a2] ${UI}`}>
      <Menu />
      <Toolbar />
      <main className="flex h-[908px] shrink-0">
        <div className="flex w-[1529px] shrink-0 flex-col">
          <div className="flex h-[552px]">
            <Hierarchy />
            <Scene />
          </div>
          <div className="mt-[5px] flex h-[351px]">
            <Console />
            <Game />
          </div>
        </div>
        <Inspector />
      </main>
      <div className="h-[27px] shrink-0 border-b border-[#c0c0c0] bg-[#a2a2a2]" />
      <Taskbar />
    </div>
  );
}
